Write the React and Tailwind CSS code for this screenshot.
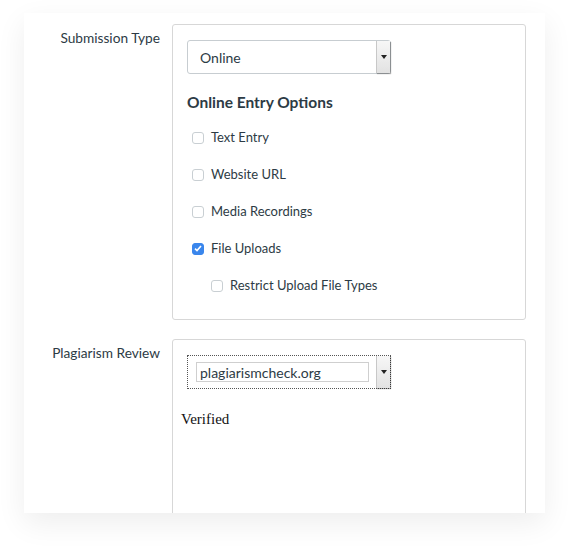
import React from "react";

function Arrow() {
  return (
    <div className="flex w-[14px] items-center justify-center self-stretch border-l border-[#c8c8c8] bg-gradient-to-b from-[#f7f7f7] to-[#e2e2e2] shadow-[1px_1px_1px_rgba(0,0,0,0.3)]">
      <svg width="6" height="4" viewBox="0 0 6 4"><path d="M0 0h6L3 4z" fill="#222" /></svg>
    </div>
  );
}

function Box({ checked }) {
  return (
    <span className={"flex h-[12px] w-[12px] shrink-0 items-center justify-center rounded-[3px] border " + (checked ? "border-[#3a86ec] bg-[#3a86ec]" : "border-[#c9cfd3] bg-white")}>
      {checked && (
        <svg width="8" height="7" viewBox="0 0 8 7"><path d="M1 3.6l2 2L7 1" fill="none" stroke="#fff" strokeWidth="1.6" /></svg>
      )}
    </span>
  );
}

function Row({ label, checked, indent }) {
  return (
    <div className={"flex h-[37px] items-center gap-[7px] " + (indent ? "pl-[24px]" : "pl-[5px]")}>
      <Box checked={checked} />
      <span className="text-[13px] text-[#2d3b45]">{label}</span>
    </div>
  );
}

export default function App() {
  return (
    <div className="min-h-[548px] bg-white pt-[13px] pl-[24px] font-['Lato','Noto_Sans',sans-serif]">
      <div className="h-[500px] w-[521px] overflow-hidden bg-white pt-[11px] pr-[19px] shadow-[0_10px_28px_rgba(0,0,0,0.07)]">
        <div className="grid grid-cols-[136px_354px] gap-x-[12px] gap-y-[19px]">
          <div className="pt-[5px] text-right text-[13.7px] leading-[18px] text-[#2d3b45]">Submission Type</div>
          <div className="rounded-[3px] border border-[#d7d7d7] px-[14px] pt-[15px] pb-[15px]">
            <div className="flex h-[34px] w-[204px] items-stretch rounded-[3px] border border-[#c7cdd1] bg-white">
              <div className="flex flex-1 items-center pl-[12px] text-[14px] text-[#2d3b45]">Online</div>
              <Arrow />
            </div>
            <div className="mt-[18px] text-[15.5px] font-bold leading-[21px] text-[#2d3b45]">Online Entry Options</div>
            <div className="mt-[6px] flex flex-col">
              <Row label="Text Entry" />
              <Row label="Website URL" />
              <Row label="Media Recordings" />
              <Row label="File Uploads" checked />
              <Row label="Restrict Upload File Types" indent />
            </div>
          </div>
          <div className="pt-[5px] text-right text-[13.7px] leading-[18px] text-[#2d3b45]">Plagiarism Review</div>
          <div className="h-[200px] rounded-[3px] border border-[#d7d7d7] pt-[15px]">
            <div className="ml-[14px] flex h-[34px] w-[204px] items-stretch border border-dotted border-[#555]">
              <div className="flex flex-1 items-center pl-[8px] pr-[7px]">
                <div className="flex h-[20px] w-full items-center border border-[#cfcfcf] pl-[3px] text-[14px] text-[#2d3b45]">plagiarismcheck.org</div>
              </div>
              <Arrow />
            </div>
            <div className="mt-[21px] pl-[8px] font-['Liberation_Serif','Times_New_Roman',serif] text-[15px] leading-[18px] text-[#111]">Verified</div>
          </div>
        </div>
      </div>
    </div>
  );
}
